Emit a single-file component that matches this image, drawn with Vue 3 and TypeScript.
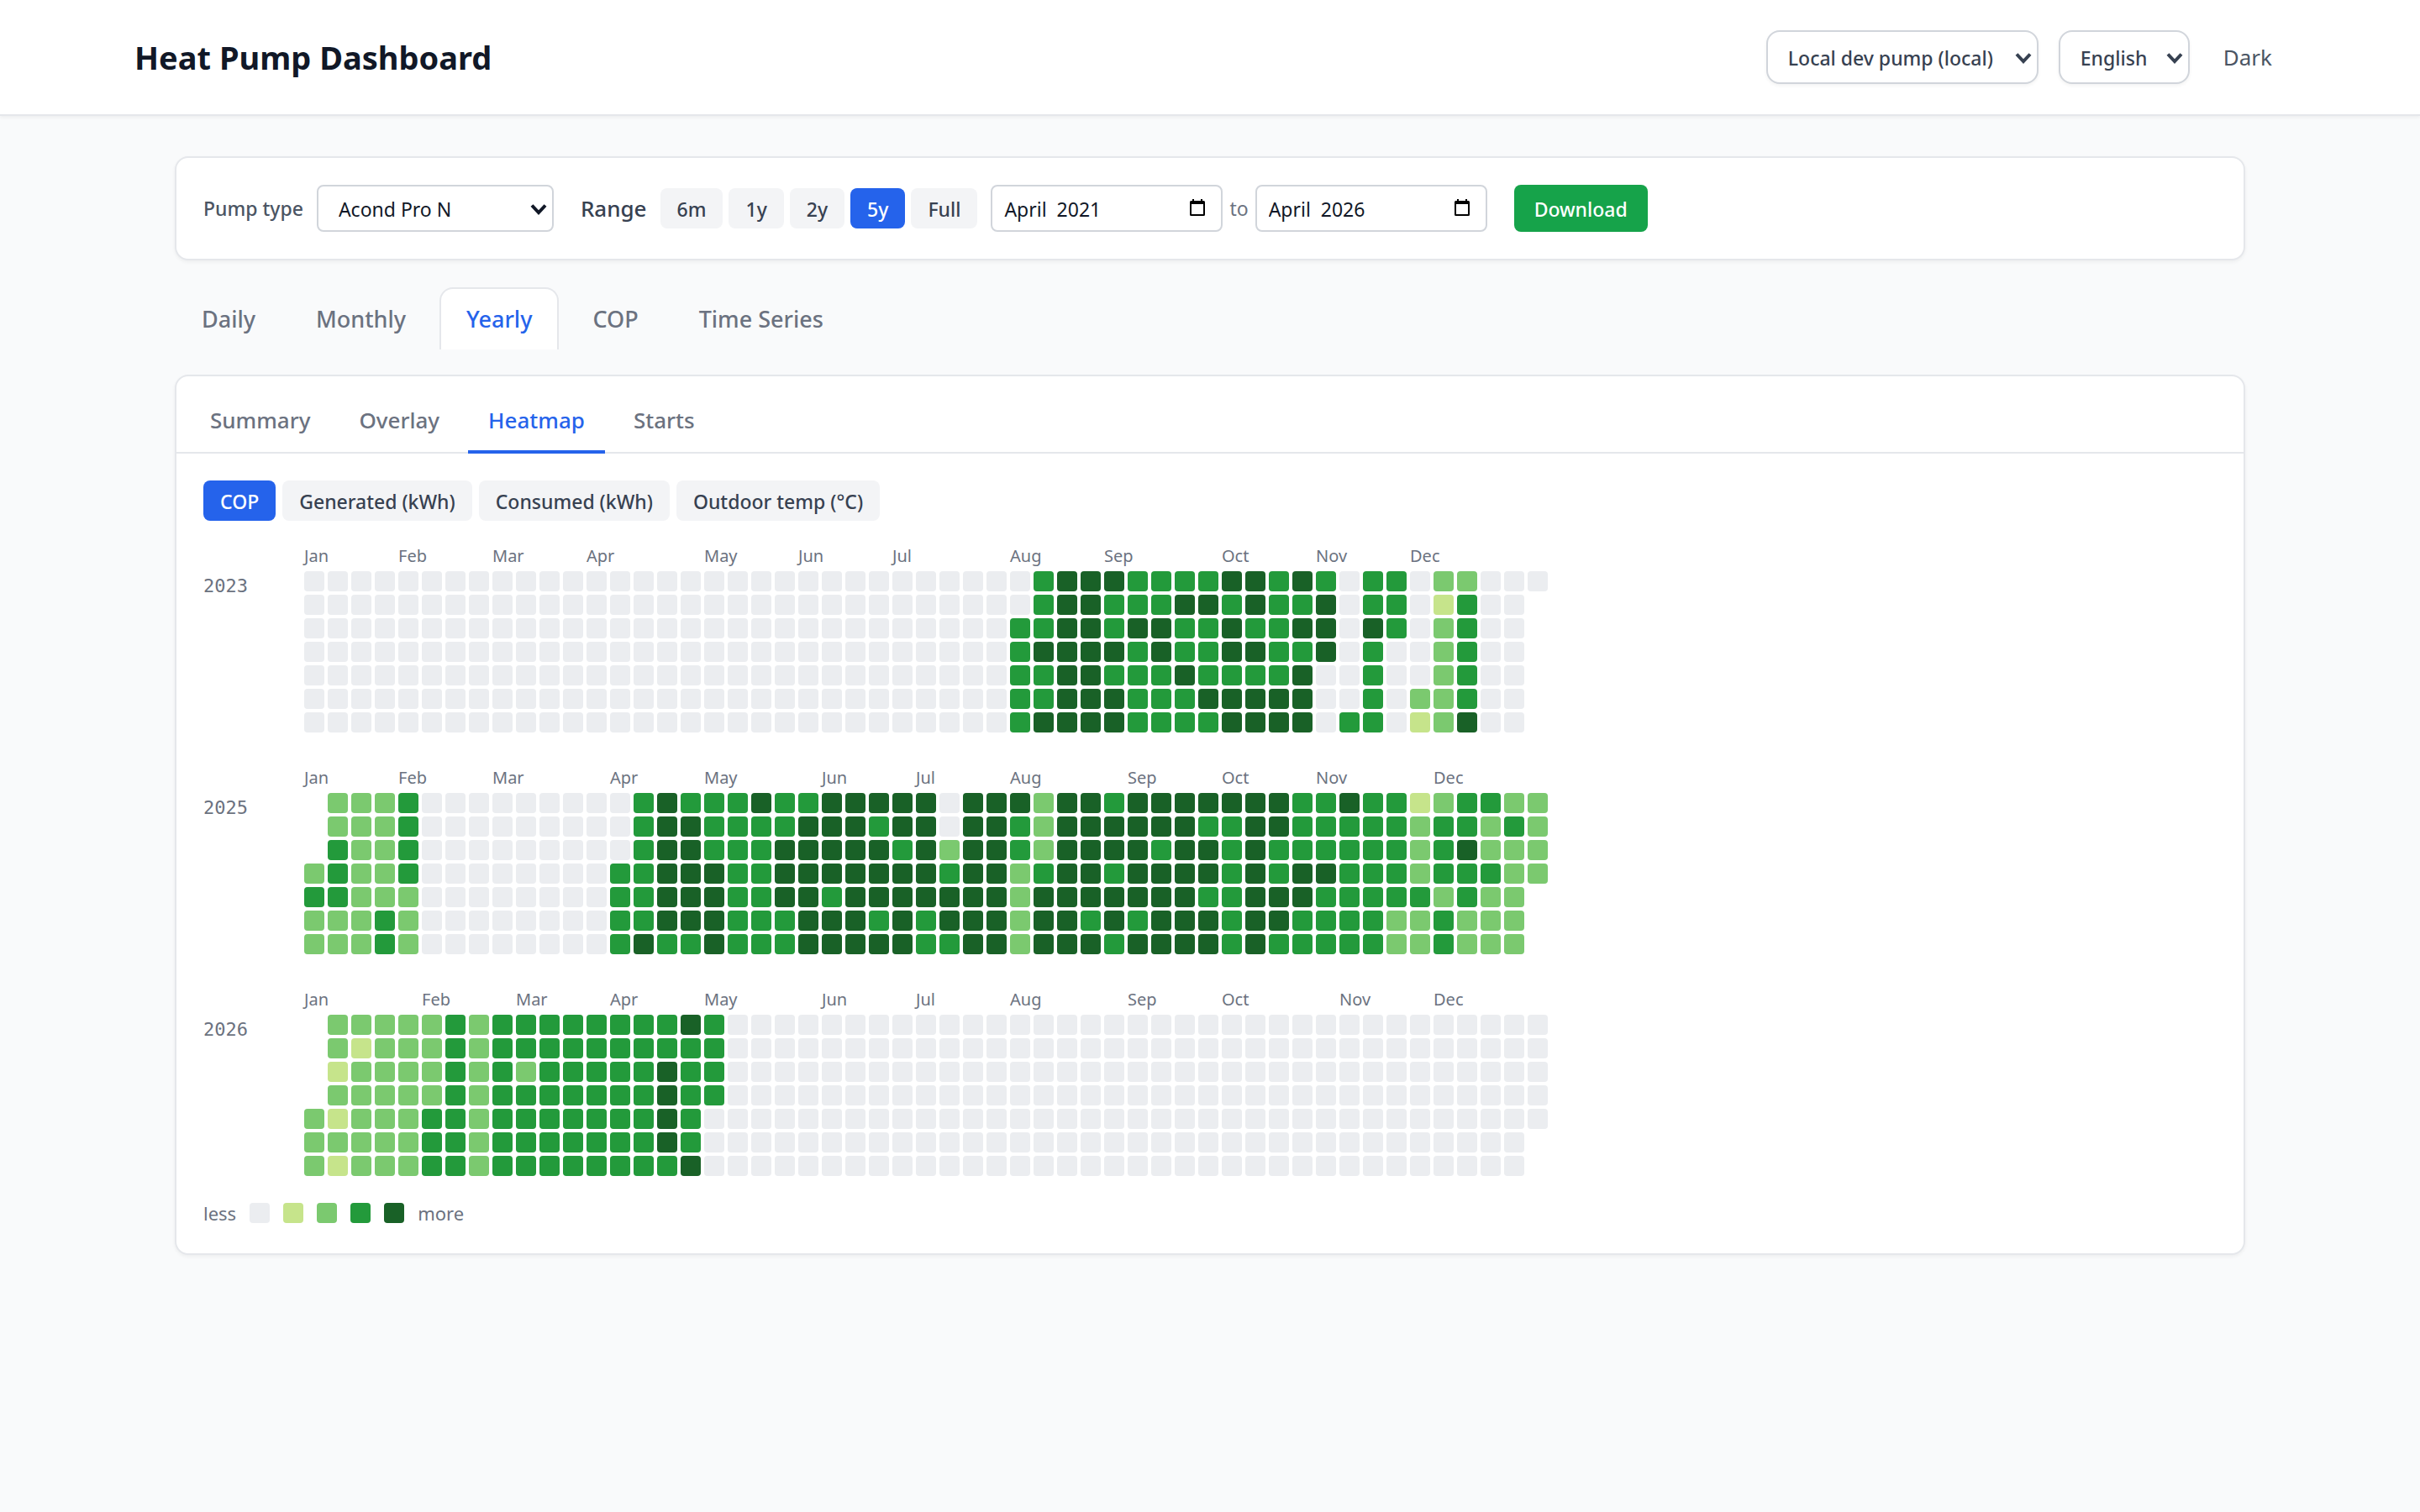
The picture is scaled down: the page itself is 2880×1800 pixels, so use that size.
<script setup lang="ts">
import { ref } from 'vue'

interface YearMap {
  year: number
  // Week column in which each month label starts
  months: number[]
  // One string per weekday; a digit is a level, a dot is a day outside the year
  rows: string[]
}

const monthNames = ['Jan', 'Feb', 'Mar', 'Apr', 'May', 'Jun', 'Jul', 'Aug', 'Sep', 'Oct', 'Nov', 'Dec']

const idle = (count: number): string => '0'.repeat(count)

const years: YearMap[] = [
  {
    year: 2023,
    months: [0, 4, 8, 12, 17, 21, 25, 30, 34, 39, 43, 47],
    rows: [
      idle(30) + '03444333344343033022000',
      idle(30) + '0344333443433403301300.',
      idle(30) + '3344344334334404302300.',
      idle(30) + '3444434334433403002300.',
      idle(30) + '3344333433334003002300.',
      idle(30) + '3344433344444003022300.',
      idle(30) + '3444433334444033012400.',
    ],
  },
  {
    year: 2025,
    months: [0, 4, 8, 13, 17, 22, 26, 30, 35, 39, 43, 48],
    rows: [
      '.2223' + idle(9) + '343334334444' + '404442443444444433433123322',
      '.2223' + idle(9) + '344333344434' + '404432444444334433333233232',
      '.3223' + idle(9) + '344333444443' + '424432444434434333333234222',
      '23223' + idle(8) + '3344433444444' + '434423443444434344333233322',
      '33222' + idle(8) + '3344433443444' + '44442444444433444333332322.',
      '22232' + idle(8) + '3344433344434' + '34442443434443443333223222.',
      '22232' + idle(8) + '3433433344444' + '33442444344443433333223222.',
    ],
  },
  {
    year: 2026,
    months: [0, 5, 9, 13, 17, 22, 26, 30, 35, 39, 44, 48],
    rows: [
      '.22222323333333343' + idle(35),
      '.21222323333333333' + idle(35),
      '.12222323233333433' + idle(35),
      '.22222323333333433' + idle(35),
      '212223323333333430' + idle(35),
      '222223323333333430' + idle(34) + '.',
      '212223323333333340' + idle(34) + '.',
    ],
  },
]

const ranges = ['6m', '1y', '2y', '5y', 'Full']
const views = ['Daily', 'Monthly', 'Yearly', 'COP', 'Time Series']
const panels = ['Summary', 'Overlay', 'Heatmap', 'Starts']
const metrics = ['COP', 'Generated (kWh)', 'Consumed (kWh)', 'Outdoor temp (°C)']

const range = ref('5y')
const view = ref('Yearly')
const panel = ref('Heatmap')
const metric = ref('COP')
const from = ref('April  2021')
const to = ref('April  2026')

const cellClass = (level: string): string => (level === '.' ? 'blank' : `level-${level}`)
</script>

<template>
  <div class="page">
    <header class="header">
      <div class="header-inner">
        <h1>Heat Pump Dashboard</h1>
        <div class="header-actions">
          <span class="select-wrap">
            <select class="header-select pump" aria-label="Pump">
              <option>Local dev pump (local)</option>
            </select>
            <svg class="chevron" viewBox="0 0 20 14" aria-hidden="true"><path d="M2 2.5 10 11 18 2.5" /></svg>
          </span>
          <span class="select-wrap">
            <select class="header-select language" aria-label="Language">
              <option>English</option>
            </select>
            <svg class="chevron" viewBox="0 0 20 14" aria-hidden="true"><path d="M2 2.5 10 11 18 2.5" /></svg>
          </span>
          <button class="theme" type="button">Dark</button>
        </div>
      </div>
    </header>

    <main class="main">
      <section class="card filters">
        <div class="field">
          <label for="pump-type">Pump type</label>
          <span class="select-wrap">
            <select id="pump-type" class="type-select">
              <option>Acond Pro N</option>
            </select>
            <svg class="chevron dark" viewBox="0 0 20 14" aria-hidden="true"><path d="M2 2.5 10 11 18 2.5" /></svg>
          </span>
        </div>
        <div class="range">
          <span class="range-title">Range</span>
          <div class="chips">
            <button
              v-for="item in ranges"
              :key="item"
              type="button"
              class="chip"
              :class="{ active: item === range }"
              @click="range = item"
            >{{ item }}</button>
          </div>
          <div class="dates">
            <span class="date">
              <input v-model="from" type="text" aria-label="From month" />
              <svg class="calendar" viewBox="0 0 20 20" aria-hidden="true">
                <path d="M4 0h2v2h8V0h2v2h1.500a1.500 1.500 0 0 1 1.500 1.500v15a1.500 1.500 0 0 1-1.500 1.500h-15a1.500 1.500 0 0 1-1.500-1.500v-15a1.500 1.500 0 0 1 1.500-1.500H4zM3 6v12h14V6z" />
              </svg>
            </span>
            <span>to</span>
            <span class="date">
              <input v-model="to" type="text" aria-label="To month" />
              <svg class="calendar" viewBox="0 0 20 20" aria-hidden="true">
                <path d="M4 0h2v2h8V0h2v2h1.500a1.500 1.500 0 0 1 1.500 1.500v15a1.500 1.500 0 0 1-1.500 1.500h-15a1.500 1.500 0 0 1-1.500-1.500v-15a1.500 1.500 0 0 1 1.500-1.500H4zM3 6v12h14V6z" />
              </svg>
            </span>
          </div>
        </div>
        <button class="download" type="button">Download</button>
      </section>

      <nav class="views">
        <button
          v-for="item in views"
          :key="item"
          type="button"
          class="view"
          :class="{ active: item === view }"
          @click="view = item"
        >{{ item }}</button>
      </nav>

      <section class="card">
        <nav class="panels">
          <button
            v-for="item in panels"
            :key="item"
            type="button"
            class="panel"
            :class="{ active: item === panel }"
            @click="panel = item"
          >{{ item }}</button>
        </nav>
        <div class="body">
          <div class="chips">
            <button
              v-for="item in metrics"
              :key="item"
              type="button"
              class="chip"
              :class="{ active: item === metric }"
              @click="metric = item"
            >{{ item }}</button>
          </div>

          <div class="years">
            <div v-for="entry in years" :key="entry.year" class="year">
              <div class="year-label">{{ entry.year }}</div>
              <div>
                <div class="months">
                  <span
                    v-for="(start, index) in entry.months"
                    :key="index"
                    :style="{ gridColumn: `${start + 1} / span 3` }"
                  >{{ monthNames[index] }}</span>
                </div>
                <div class="weeks">
                  <template v-for="(row, day) in entry.rows" :key="day">
                    <i v-for="(level, week) in row" :key="week" class="cell" :class="cellClass(level)"></i>
                  </template>
                </div>
              </div>
            </div>
          </div>

          <div class="legend">
            <span>less</span>
            <i v-for="level in 5" :key="level" class="cell" :class="`level-${level - 1}`"></i>
            <span>more</span>
          </div>
        </div>
      </section>
    </main>
  </div>
</template>

<style>
body {
  background: #f9fafb;
}
</style>

<style scoped>
.page {
  color: #111827;
  font-family: "Noto Sans", "Open Sans", sans-serif;
  font-size: 23px;
  line-height: 32px;
}

.page *,
.page *::before,
.page *::after {
  box-sizing: border-box;
}

button,
select,
input {
  margin: 0;
  color: inherit;
  font: inherit;
}

button {
  border: 0;
  background: none;
  white-space: nowrap;
  cursor: pointer;
}

.header {
  padding: 36px 160px;
  border-bottom: 2px solid #e5e7eb;
  background: #fff;
  box-shadow: 0 2px 4px rgba(0, 0, 0, 0.05);
}

.header-inner,
.header-actions {
  display: flex;
  align-items: center;
}

.header-inner {
  justify-content: space-between;
}

.header-actions {
  gap: 24px;
}

h1 {
  margin: 0;
  font-size: 38px;
  font-weight: 700;
  line-height: 56px;
}

.select-wrap {
  position: relative;
  display: block;
}

select {
  display: block;
  appearance: none;
  border: 2px solid #d1d5db;
  background: #fff;
}

.header-select {
  height: 64px;
  padding: 2px 24px 0;
  border-radius: 16px;
  color: #374151;
  font-weight: 500;
  box-shadow: 0 2px 4px rgba(0, 0, 0, 0.05);
}

.pump {
  width: 324px;
}

.language {
  width: 156px;
}

.chevron {
  position: absolute;
  top: 50%;
  right: 8px;
  width: 20px;
  height: 14px;
  margin-top: -6px;
  fill: none;
  stroke: #374151;
  stroke-width: 4;
  pointer-events: none;
}

.chevron.dark {
  stroke: #111827;
}

.theme {
  padding: 8px 16px;
  color: #4b5563;
  font-size: 26px;
}

.main {
  padding: 48px 208px;
}

.card {
  border: 2px solid #e5e7eb;
  border-radius: 16px;
  background: #fff;
  box-shadow: 0 2px 4px rgba(0, 0, 0, 0.05);
}

.filters {
  display: flex;
  align-items: center;
  gap: 32px;
  padding: 32px;
}

.field,
.range,
.dates {
  display: flex;
  align-items: center;
}

.field,
.range {
  gap: 16px;
}

.field label {
  color: #4b5563;
  font-weight: 500;
}

.type-select {
  width: 282px;
  height: 56px;
  padding: 2px 24px 0;
  border-radius: 8px;
}

.range-title {
  color: #374151;
  font-size: 26px;
  font-weight: 500;
}

.chips {
  display: flex;
  gap: 8px;
}

.range .chips {
  gap: 7px;
}

.chip {
  padding: 9px 20px 7px;
  border-radius: 8px;
  background: #f3f4f6;
  color: #374151;
  font-weight: 500;
}

.chip.active {
  background: #2563eb;
  color: #fff;
}

.dates {
  gap: 8px;
  color: #6b7280;
}

.date {
  position: relative;
  display: block;
}

.date input {
  display: block;
  width: 276px;
  height: 56px;
  padding: 10px 48px 8px 14px;
  border: 2px solid #d1d5db;
  border-radius: 8px;
  background: #fff;
  color: #111827;
}

.calendar {
  position: absolute;
  top: 17px;
  right: 20px;
  width: 20px;
  height: 20px;
  fill: #000;
  fill-rule: evenodd;
  pointer-events: none;
}

.download {
  height: 56px;
  padding: 2px 24px 0;
  border-radius: 8px;
  background: #16a34a;
  color: #fff;
  font-weight: 500;
}

.views {
  display: flex;
  gap: 8px;
  padding: 32px 0 30px;
}

.view {
  padding: 20px 30px;
  border: 2px solid transparent;
  border-bottom: 0;
  border-radius: 16px 16px 0 0;
  color: #6b7280;
  font-size: 27px;
  font-weight: 500;
}

.view.active {
  border-color: #e5e7eb;
  background: #fff;
  color: #2563eb;
}

.panels {
  display: flex;
  gap: 10px;
  padding: 12px 16px 0;
  border-bottom: 2px solid #e5e7eb;
}

.panel {
  margin-bottom: -2px;
  padding: 24px 24px 20px;
  border-bottom: 4px solid transparent;
  color: #6b7280;
  font-size: 26px;
  font-weight: 500;
}

.panel.active {
  border-color: #2563eb;
  color: #2563eb;
}

.body {
  padding: 32px;
}

.years {
  display: flex;
  flex-direction: column;
  gap: 38px;
  padding: 26px 0 28px;
}

.year {
  display: grid;
  grid-template-columns: 104px auto;
  justify-content: start;
  gap: 16px;
}

.year-label {
  padding-top: 36px;
  color: #6b7280;
  font-family: "DejaVu Sans Mono", "Liberation Mono", monospace;
  font-size: 22px;
}

.months,
.weeks {
  display: grid;
  grid-template-columns: repeat(53, 24px);
  gap: 4px;
}

.months {
  padding-bottom: 2px;
  color: #6b7280;
  font-size: 20px;
}

.months span {
  grid-row: 1;
}

.cell {
  width: 24px;
  height: 24px;
  border-radius: 4px;
}

.blank {
  visibility: hidden;
}

.level-0 {
  background: #ebedf0;
}

.level-1 {
  background: #c6e48b;
}

.level-2 {
  background: #7bc96f;
}

.level-3 {
  background: #239a3b;
}

.level-4 {
  background: #196127;
}

.legend {
  display: flex;
  align-items: center;
  gap: 16px;
  color: #6b7280;
  font-size: 22px;
}
</style>
